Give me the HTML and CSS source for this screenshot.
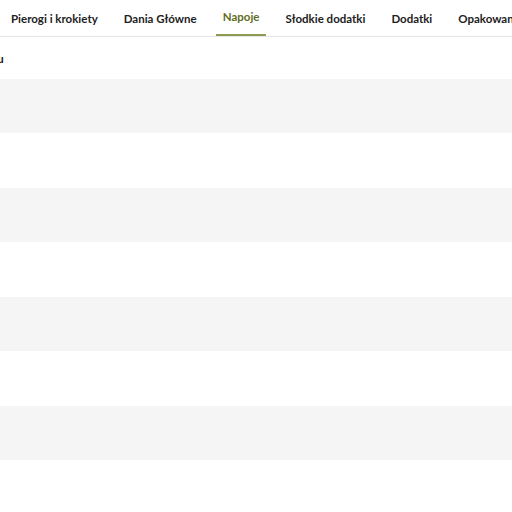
FILE: index.html
```html
<!DOCTYPE html>
<html lang="pl">
<head>
<meta charset="utf-8">
<link rel="stylesheet" href="styles.css">
</head>
<body>
<nav class="tabs">
  <a class="tab">Pierogi i krokiety</a>
  <a class="tab">Dania Główne</a>
  <a class="tab active">Napoje</a>
  <a class="tab">Słodkie dodatki</a>
  <a class="tab">Dodatki</a>
  <a class="tab">Opakowania</a>
</nav>
<div class="heading"><span class="heading-text">u</span></div>
<div class="list">
  <div class="row shade"></div>
  <div class="row"></div>
  <div class="row shade"></div>
  <div class="row"></div>
  <div class="row shade"></div>
  <div class="row"></div>
  <div class="row shade"></div>
  <div class="row"></div>
</div>
</body>
</html>
```
FILE: styles.css
```css
* { box-sizing: border-box; }
html, body { margin: 0; padding: 0; background: #fff; overflow: hidden; }
body { font-family: Lato, "Noto Sans", sans-serif; color: #222; width: 512px; height: 512px; }
.tabs {
  display: flex;
  white-space: nowrap;
  overflow: hidden;
  border-bottom: 1px solid #e6e6e6;
  height: 37px;
}
.tab {
  flex: none;
  font-weight: 700;
  font-size: 11.5px;
  color: #222;
  margin: 0 6px;
  padding: 12px 7px 0;
  height: 36px;
}
.tab:first-child { margin-left: 4px; }
.tab.active {
  color: #5f6e1d;
  padding-top: 10px;
  border-bottom: 2px solid #8a9c50;
}
.heading {
  height: 42px;
  padding-top: 14px;
  font-weight: 700;
  font-size: 12px;
  overflow: hidden;
}
.heading-text { display: block; margin-left: -3px; }
.list { display: flex; flex-direction: column; }
.row { height: 55px; }
.row.shade { background: #f5f5f5; height: 54px; }
```
